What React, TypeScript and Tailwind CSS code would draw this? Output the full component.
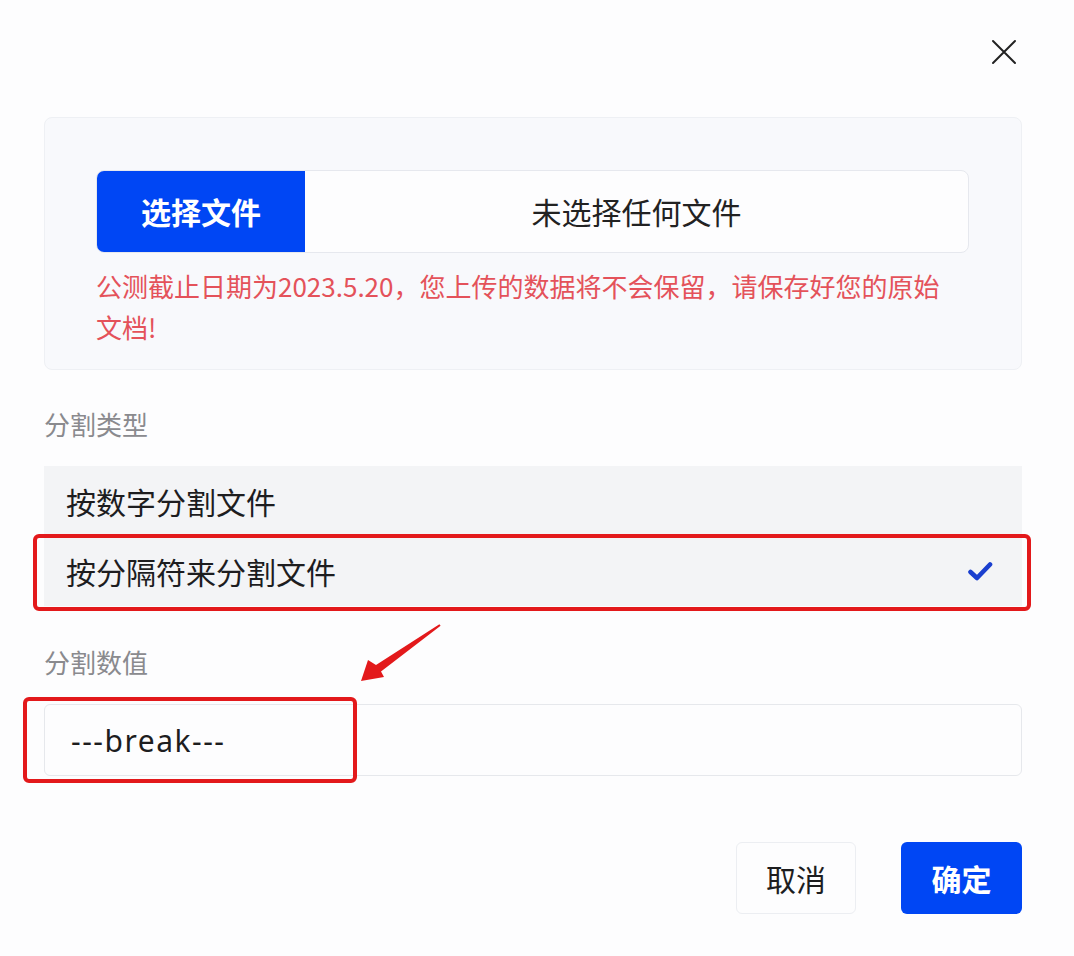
import { useState } from 'react'

const cjk = 'font-["Noto_Sans_CJK_SC","Noto_Sans",sans-serif]'

/** Close icon: two thin diagonal strokes */
function CloseIcon() {
  return (
    <svg width={26} height={26} viewBox="0 0 26 26" fill="none" stroke="#222" strokeWidth={2} strokeLinecap="round">
      <path d="M2 2l22 22M24 2L2 24" />
    </svg>
  )
}

/** Bold check mark shown on the selected option */
function CheckIcon() {
  return (
    <svg width={26} height={21} viewBox="0 0 26 21" fill="none" stroke="#1a3fcf" strokeWidth={4.6} strokeLinecap="round" strokeLinejoin="round">
      <path d="M3.5 11l6.5 6L23 3.5" />
    </svg>
  )
}

/** Annotation arrow drawn on top of the form */
function RedArrow() {
  return (
    <svg
      className="pointer-events-none absolute left-[355px] top-[620px]"
      width={92}
      height={66}
      viewBox="0 0 92 66"
    >
      <polygon
        points="6,61 13,40 21,45 84.4,4.2 85.6,5.8 26,51.5 29,57"
        fill="#e3191b"
      />
    </svg>
  )
}

const options = ['按数字分割文件', '按分隔符来分割文件']

export default function App() {
  const [selected, setSelected] = useState(1)
  const [value, setValue] = useState('---break---')

  return (
    <div className={`relative h-[956px] w-[1074px] bg-[#fdfdfe] ${cjk}`}>
      {/* close */}
      <div className="flex justify-end pr-[57px] pt-[39px]">
        <button aria-label="关闭" className="h-[26px] w-[26px]">
          <CloseIcon />
        </button>
      </div>

      <div className="mt-[52px] pl-[44px] pr-[52px]">
        {/* upload panel */}
        <div className="rounded-lg border border-[#eef0f4] bg-[#f8f9fc] pb-[22px] pl-[51px] pr-[52px] pt-[52px]">
          <div className="flex h-[83px] overflow-hidden rounded-lg border border-[#e6e8ee] bg-[#fdfdfe]">
            <span className="flex w-[208px] items-center justify-center bg-[#0046f4] text-[30px] font-bold text-white">
              选择文件
            </span>
            <span className="flex flex-1 items-center justify-center text-[30px] text-[#222]">
              未选择任何文件
            </span>
          </div>
          <p className="mt-[12px] w-[860px] text-[26px] leading-[41px] text-[#e4525a]">
            公测截止日期为2023.5.20，您上传的数据将不会保留，请保存好您的原始文档!
          </p>
        </div>

        {/* split type */}
        <div className="mt-[37px] text-[26px] leading-[34px] text-[#8a8a8e]">分割类型</div>
        <div className="mt-[25px] flex flex-col">
          {options.map((o, i) => (
            <div
              key={o}
              onClick={() => setSelected(i)}
              className="relative flex h-[70px] cursor-pointer items-center justify-between bg-[#f3f4f6] pl-[22px] pr-[29px] text-[30px] text-[#1d1d1f]"
            >
              <span>{o}</span>
              {selected === i && <CheckIcon />}
              {i === 1 && (
                <span className="pointer-events-none absolute -bottom-[5px] -left-[11px] -right-[9px] -top-[2px] rounded-md border-4 border-[#e3191b]" />
              )}
            </div>
          ))}
        </div>

        {/* split value */}
        <div className="mt-[39px] text-[26px] leading-[34px] text-[#8a8a8e]">分割数值</div>
        <div className="relative mt-[25px]">
          <input
            value={value}
            onChange={(e) => setValue(e.target.value)}
            className='h-[72px] w-full rounded-md border border-[#e6e8ec] bg-[#fdfdfe] pl-[26px] font-["Noto_Sans","Noto_Sans_CJK_SC",sans-serif] text-[30px] tracking-[1.5px] text-[#1d1d1f] outline-none'
          />
          <span className="pointer-events-none absolute -bottom-[7px] -left-[21px] -top-[7px] w-[334px] rounded-md border-4 border-[#e3191b]" />
        </div>

        {/* actions */}
        <div className="mt-[66px] flex justify-end gap-[45px]">
          <button className="h-[72px] w-[120px] rounded-md border border-[#eceef2] bg-[#fdfdfe] text-[30px] text-[#1d1d1f]">
            取消
          </button>
          <button className="h-[72px] w-[121px] rounded-md bg-[#0046f4] text-[30px] font-bold text-white">
            确定
          </button>
        </div>
      </div>

      <RedArrow />
    </div>
  )
}
